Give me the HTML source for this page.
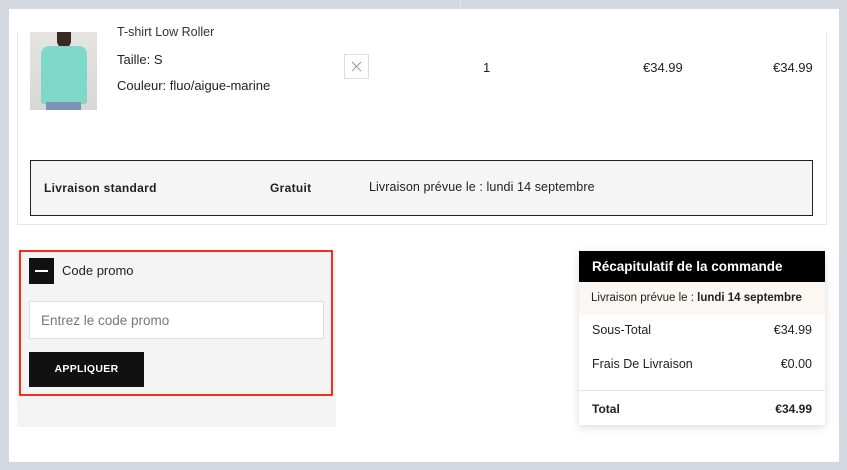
<!DOCTYPE html>
<html><head><meta charset="utf-8"><style>
*{margin:0;padding:0;box-sizing:border-box}
body{width:847px;height:470px;background:#d3d7df;position:relative;overflow:hidden;font-family:"Liberation Sans",Arial,sans-serif;color:#222}
.a{position:absolute}
</style></head><body>
<div class="a" style="left:460px;top:0;width:1px;height:9px;background:#e4e7ec"></div>
<div class="a" style="left:9px;top:9px;width:830px;height:453px;background:#fff"></div>
<div class="a" style="left:17px;top:32px;width:810px;height:193px;border:1px solid #e6e6e6;border-top:none"></div>
<div class="a" style="left:30px;top:32px;width:67px;height:78px;background:linear-gradient(#e6e4e2,#d9d7d5);overflow:hidden">
<div class="a" style="left:27px;top:0;width:14px;height:16px;background:#3a2a22;border-radius:0 0 7px 7px"></div>
<div class="a" style="left:11px;top:14px;width:46px;height:58px;background:#7ed9c8;border-radius:8px 8px 2px 2px"></div>
<div class="a" style="left:16px;top:70px;width:35px;height:8px;background:#7c93b4"></div>
</div>
<div class="a" style="left:117px;top:25px;font-size:12.5px;color:#333">T-shirt Low Roller</div>
<div class="a" style="left:117px;top:52px;font-size:13px;color:#222">Taille: S</div>
<div class="a" style="left:117px;top:78px;font-size:13px;color:#222">Couleur: fluo/aigue-marine</div>
<div class="a" style="left:344px;top:54px;width:25px;height:25px;border:1px solid #ddd">
<svg width="23" height="23" style="position:absolute;left:0;top:0"><path d="M7 7L16 16M16 7L7 16" stroke="#999" stroke-width="1"/></svg></div>
<div class="a" style="left:483px;top:60px;font-size:13px">1</div>
<div class="a" style="left:643px;top:60px;font-size:13px">€34.99</div>
<div class="a" style="left:773px;top:60px;font-size:13px">€34.99</div>
<div class="a" style="left:30px;top:160px;width:783px;height:56px;border:1px solid #222;background:#f5f5f5"></div>
<div class="a" style="left:44px;top:181px;font-size:12px;font-weight:bold;letter-spacing:.3px">Livraison standard</div>
<div class="a" style="left:270px;top:181px;font-size:12px;font-weight:bold;letter-spacing:.3px">Gratuit</div>
<div class="a" style="left:369px;top:180px;font-size:12.5px;letter-spacing:.1px">Livraison prévue le : lundi 14 septembre</div>
<div class="a" style="left:17px;top:250px;width:319px;height:177px;background:#f4f4f4"></div>
<div class="a" style="left:19px;top:250px;width:314px;height:146px;border:2px solid #f0301c"></div>
<div class="a" style="left:29px;top:258px;width:25px;height:26px;background:#111"><div class="a" style="left:6px;top:12px;width:13px;height:2px;background:#fff"></div></div>
<div class="a" style="left:62px;top:263px;font-size:13px">Code promo</div>
<div class="a" style="left:29px;top:301px;width:295px;height:38px;background:#fff;border:1px solid #ddd;font-size:13.5px;color:#777;padding:11px 0 0 11px">Entrez le code promo</div>
<div class="a" style="left:29px;top:352px;width:115px;height:35px;background:#111;color:#fff;font-size:10.5px;font-weight:bold;text-align:center;line-height:35px;letter-spacing:.3px">APPLIQUER</div>
<div class="a" style="left:579px;top:251px;width:246px;height:174px;background:#fff;box-shadow:0 2px 8px rgba(0,0,0,.15)">
<div style="height:31px;background:#000;color:#fff;font-weight:bold;font-size:13.5px;padding:8px 0 0 13px">Récapitulatif de la commande</div>
<div style="height:33px;background:#fcf7f2;font-size:11.5px;padding:10px 0 0 12px">Livraison prévue le : <b>lundi 14 septembre</b></div>
<div class="a" style="left:13px;top:72px;font-size:12.5px">Sous-Total</div><div class="a" style="right:13px;top:72px;font-size:12.5px">€34.99</div>
<div class="a" style="left:13px;top:106px;font-size:12.5px">Frais De Livraison</div><div class="a" style="right:13px;top:106px;font-size:12.5px">€0.00</div>
<div class="a" style="left:0;top:139px;width:246px;height:1px;background:#e6e6e6"></div>
<div class="a" style="left:13px;top:151px;font-size:12px;font-weight:bold">Total</div><div class="a" style="right:13px;top:151px;font-size:12px;font-weight:bold">€34.99</div>
</div>
</body></html>
